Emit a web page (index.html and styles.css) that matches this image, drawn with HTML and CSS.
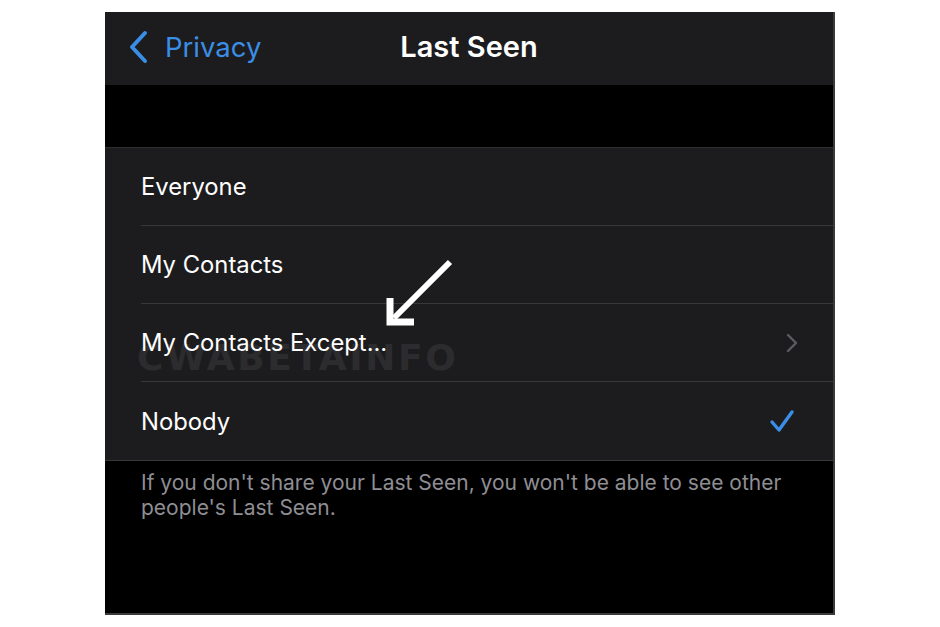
FILE: index.html
```html
<!DOCTYPE html>
<html lang="en">
	<head>
		<meta charset="UTF-8" />
		<title>Last Seen</title>
		<link rel="stylesheet" href="styles.css">
	</head>
	<body>
		<div class="phone">
			<div class="navbar">
				<div class="back">
					<svg class="back-icon" width="22" height="34" viewBox="0 0 22 34">
						<path d="M18 3 L5 17 L18 31" fill="none" stroke="#3a8ee6" stroke-width="4" stroke-linecap="round" stroke-linejoin="round" />
					</svg>
					<span>Privacy</span>
				</div>
				<h1 class="title">Last Seen</h1>
			</div>
			<div class="gap"></div>
			<ul class="list">
				<li class="row"><span>Everyone</span></li>
				<li class="row"><span>My Contacts</span></li>
				<li class="row">
					<span class="watermark">CWABETAINFO</span>
					<span class="label">My Contacts Except...</span>
					<svg class="chevron" width="12" height="20" viewBox="0 0 12 20">
						<path d="M2 2 L10 10 L2 18" fill="none" stroke="#5b5b60" stroke-width="2.4" stroke-linecap="round" stroke-linejoin="round" />
					</svg>
				</li>
				<li class="row">
					<span>Nobody</span>
					<svg class="check" width="26" height="24" viewBox="0 0 26 24">
						<path d="M3 13 L10 21 L23 3" fill="none" stroke="#3a8ee6" stroke-width="3.4" stroke-linecap="round" stroke-linejoin="round" />
					</svg>
				</li>
			</ul>
			<p class="footer">If you don't share your Last Seen, you won't be able to see other people's Last Seen.</p>
			<svg class="arrow" width="72" height="70" viewBox="0 0 72 70">
				<path d="M66 4 L10 60" stroke="#fff" stroke-width="6" />
				<path d="M6 40 L6 64 L30 64" fill="none" stroke="#fff" stroke-width="7" />
			</svg>
		</div>
	</body>
</html>
```

FILE: styles.css
```css
* {
	margin: 0;
	padding: 0;
	box-sizing: border-box;
}

body {
	background: #fff;
	font-family: "Inter", "Liberation Sans", sans-serif;
}

.phone {
	position: relative;
	width: 730px;
	height: 603px;
	margin: 12px 0 0 105px;
	background: #000;
	border-right: 2px solid #3a3a3a;
	border-bottom: 2px solid #3a3a3a;
	overflow: hidden;
}

.navbar {
	height: 73px;
	background: #1c1c1e;
	display: flex;
	align-items: center;
	justify-content: center;
	position: relative;
}

.back {
	position: absolute;
	left: 22px;
	top: 0;
	height: 73px;
	display: flex;
	align-items: center;
	gap: 16px;
	color: #3a8ee6;
	font-size: 27.5px;
	margin-top: -2px;
}

.title {
	color: #fff;
	font-size: 29px;
	font-weight: 600;
	margin-top: -4px;
}

.gap {
	height: 62px;
}

.list {
	list-style: none;
	background: #1c1c1e;
	border-top: 1px solid #2e2e30;
	border-bottom: 1px solid #38383a;
}

.row {
	position: relative;
	height: 78px;
	margin-left: 36px;
	padding-right: 35px;
	display: flex;
	align-items: center;
	justify-content: space-between;
	color: #fff;
	font-size: 23.8px;
	border-bottom: 1px solid #38383a;
}

.row:last-child {
	border-bottom: none;
}

.label {
	position: relative;
}

.check {
	margin-right: 3px;
}

.watermark {
	position: absolute;
	left: -4px;
	top: 33px;
	color: #2c2c2e;
	font-size: 36px;
	font-weight: 900;
	letter-spacing: 2.6px;
	font-family: "DejaVu Sans", sans-serif;
}

.footer {
	padding: 9px 40px 0 36px;
	color: #8e8e93;
	font-size: 21px;
	line-height: 25px;
}

.arrow {
	position: absolute;
	left: 279px;
	top: 246px;
}
```
